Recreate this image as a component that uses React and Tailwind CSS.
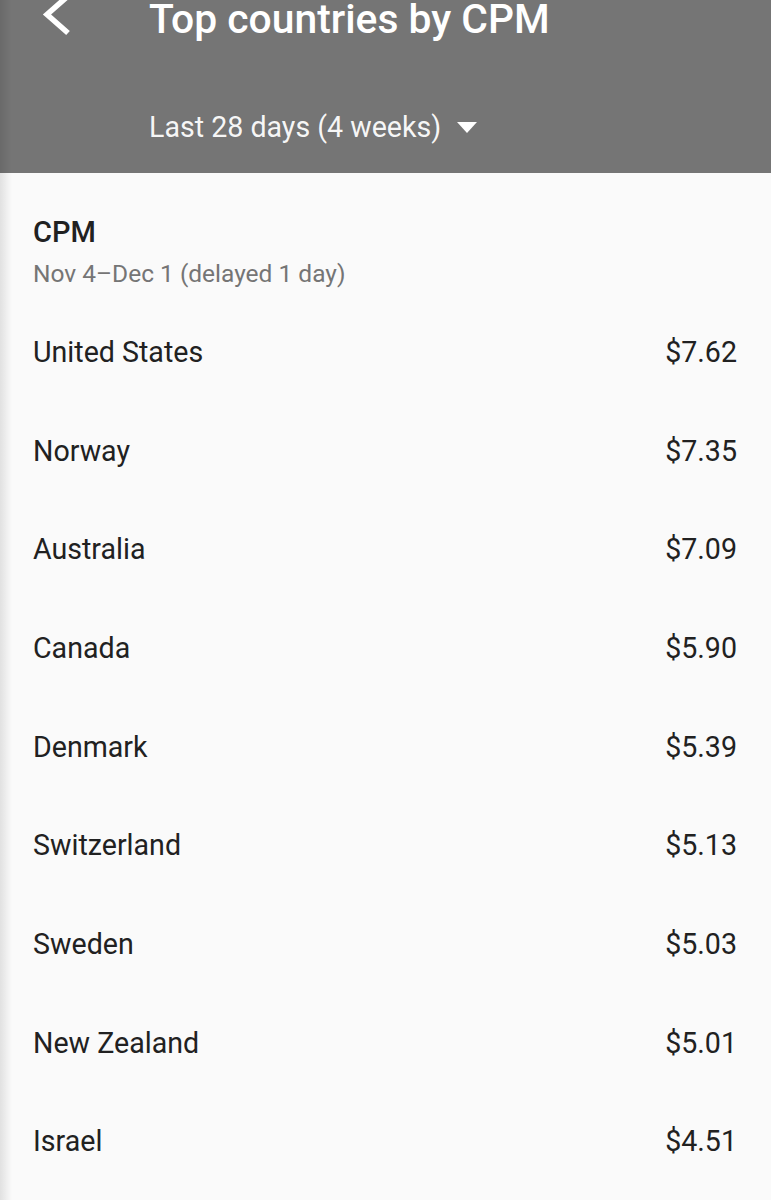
import React from "react";

const rows = [
  ["United States", "$7.62"],
  ["Norway", "$7.35"],
  ["Australia", "$7.09"],
  ["Canada", "$5.90"],
  ["Denmark", "$5.39"],
  ["Switzerland", "$5.13"],
  ["Sweden", "$5.03"],
  ["New Zealand", "$5.01"],
  ["Israel", "$4.51"],
];

export default function App() {
  return (
    <div
      className="relative w-[771px] h-[1200px] overflow-hidden bg-[#fafafa]"
      style={{ fontFamily: "Roboto, 'Noto Sans', sans-serif" }}
    >
      <header className="h-[173px] bg-[#757575] flex flex-col">
        <div className="flex items-start h-[40px] mt-[-1px]">
          <div className="w-[149px] h-[40px] relative shrink-0">
            <svg
              className="absolute left-[40px] top-[-3px]"
              width="36"
              height="42"
              viewBox="0 0 36 42"
            >
              <polyline
                points="28,0 7,18.5 28,37"
                fill="none"
                stroke="#ffffff"
                strokeWidth="5.5"
              />
            </svg>
          </div>
          <h1 className="text-white text-[40.8px] leading-[40px] font-medium whitespace-nowrap">
            Top countries by CPM
          </h1>
        </div>
        <div className="flex items-center ml-[149px] mt-[70px] h-[36px]">
          <span className="text-white/95 text-[28.6px] leading-[36px] whitespace-nowrap">
            Last 28 days (4 weeks)
          </span>
          <svg className="ml-[16px] mt-[0px]" width="20" height="11" viewBox="0 0 20 11">
            <polygon points="0,0 20,0 10,11" fill="#ffffff" />
          </svg>
        </div>
      </header>

      <main className="pl-[33px] pr-[34px]">
        <div className="pt-[42px]">
          <div className="text-[#212121] text-[29px] leading-[34px] font-medium">CPM</div>
          <div className="text-[#757575] text-[24.5px] leading-[30px] mt-[10px]">
            Nov 4–Dec 1 (delayed 1 day)
          </div>
        </div>
        <div className="mt-[14px]">
          {rows.map(([c, v]) => (
            <div
              key={c}
              className="flex justify-between items-center h-[98.7px] text-[#212121] text-[28.6px]"
            >
              <span>{c}</span>
              <span>{v}</span>
            </div>
          ))}
        </div>
      </main>

      <div className="pointer-events-none absolute left-0 top-0 h-full w-[12px] bg-gradient-to-r from-black/10 to-transparent" />
    </div>
  );
}
